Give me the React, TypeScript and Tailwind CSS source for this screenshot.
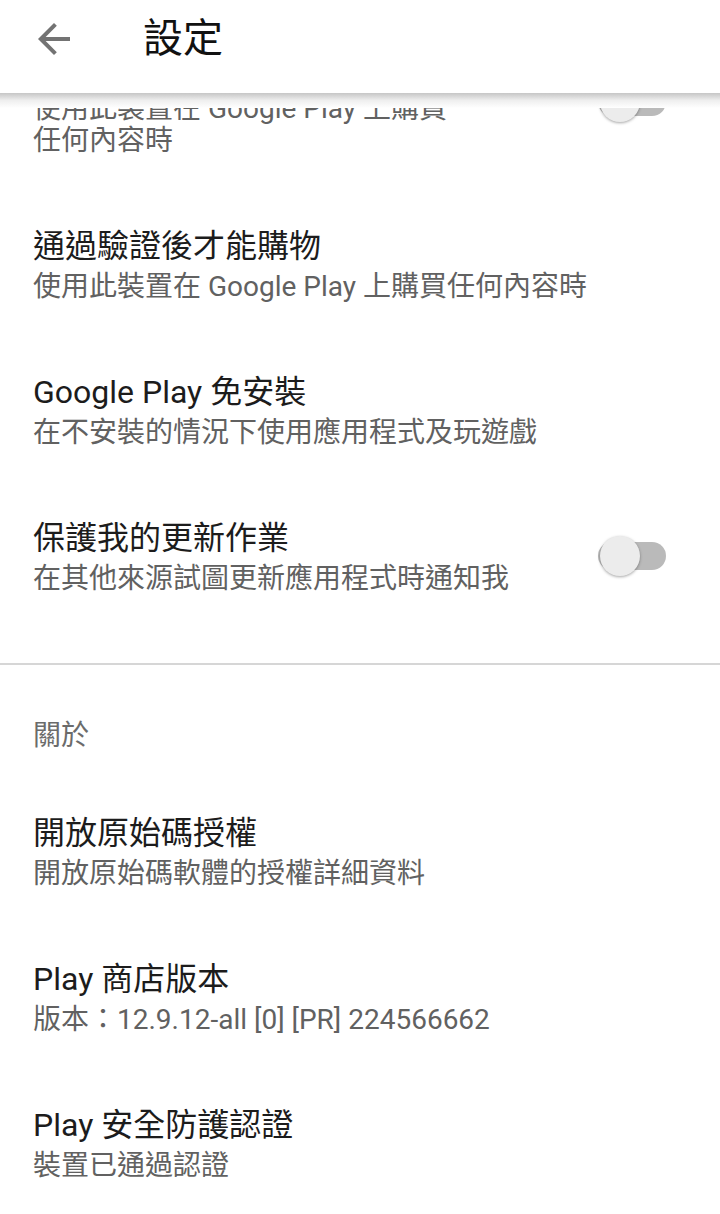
const FONT = "font-['Roboto','Noto_Sans_CJK_TC',sans-serif]";

type Item = {
  title: string;
  summary: React.ReactNode;
  toggle?: boolean;
};

const securityItems: Item[] = [
  {
    title: '使用驗證',
    summary: (
      <>
        使用此裝置在 Google Play 上購買
        <br />
        任何內容時
      </>
    ),
    toggle: true,
  },
  { title: '通過驗證後才能購物', summary: '使用此裝置在 Google Play 上購買任何內容時' },
  { title: 'Google Play 免安裝', summary: '在不安裝的情況下使用應用程式及玩遊戲' },
  { title: '保護我的更新作業', summary: '在其他來源試圖更新應用程式時通知我', toggle: true },
];

const aboutItems: Item[] = [
  { title: '開放原始碼授權', summary: '開放原始碼軟體的授權詳細資料' },
  { title: 'Play 商店版本', summary: '版本：12.9.12-all [0] [PR] 224566662' },
  { title: 'Play 安全防護認證', summary: '裝置已通過認證' },
];

function Toggle() {
  return (
    <div className="relative w-[68px] h-[42px] flex items-center">
      <div className="w-[68px] h-[28px] rounded-full bg-[#bababa]" />
      <div className="absolute left-[2px] top-[1px] w-[40px] h-[40px] rounded-full bg-[#ececec] shadow-[0_1px_3px_rgba(0,0,0,0.35)]" />
    </div>
  );
}

function Row({ item }: { item: Item }) {
  return (
    <div className="flex items-center pl-[33px] pr-[54px] py-[34px]">
      <div className="flex-1">
        <div className="text-[32px] leading-[42px] text-[#1c1c1c]">{item.title}</div>
        <div className="mt-[4px] text-[28px] leading-[32px] text-[#616161]">{item.summary}</div>
      </div>
      {item.toggle && <Toggle />}
    </div>
  );
}

export default function App() {
  return (
    <div className={`relative w-[720px] h-[1214px] overflow-hidden bg-white ${FONT}`}>
      <div className="pt-[13px]">
        {securityItems.map((item) => (
          <Row key={item.title} item={item} />
        ))}
        <div className="h-[34px]" />
        <div className="h-[2px] bg-[#d6d6d6]" />
        <div className="pl-[33px] pt-[55px] pb-[26px] text-[28px] leading-[32px] text-[#6b6b6b]">關於</div>
        {aboutItems.map((item) => (
          <Row key={item.title} item={item} />
        ))}
      </div>

      {/* toolbar, plus the clipped strip under its shadow */}
      <header className="absolute top-0 left-0 right-0 bg-white">
        <div className="flex items-center h-[77px] pl-[30px]">
          <svg viewBox="0 0 24 24" className="w-12 h-12" fill="#737373">
            <path d="M20 11H7.83l5.59-5.59L12 4l-8 8 8 8 1.41-1.41L7.83 13H20v-2z" />
          </svg>
          <h1 className="ml-[65px] text-[40px] leading-[48px] text-[#111111]">設定</h1>
        </div>
        <div className="h-[16px]" />
        <div className="h-[15px] bg-linear-to-b from-[#c6c6c6] via-[#efefef] to-white" />
      </header>
    </div>
  );
}
